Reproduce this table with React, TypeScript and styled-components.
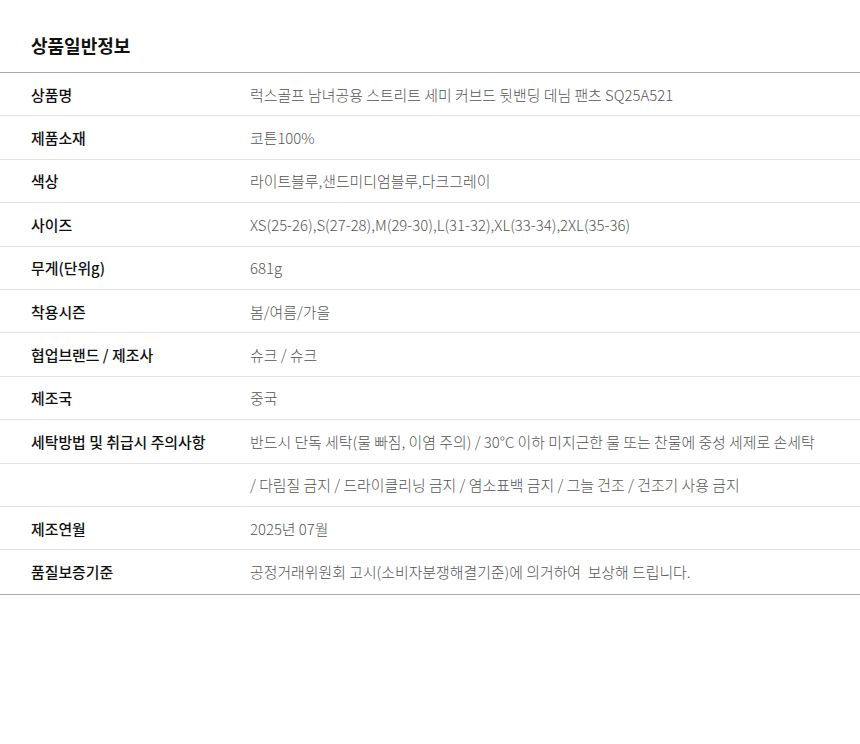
import styled, { createGlobalStyle } from "styled-components";

const GlobalStyle = createGlobalStyle`
  html, body {
    margin: 0;
    padding: 0;
    background: #fff;
  }
  body {
    font-family: "Noto Sans CJK KR", "Noto Sans", sans-serif;
  }
`;

const Wrapper = styled.section`
  width: 860px;
  padding-top: 32px;
`;

const Title = styled.h2`
  margin: 0;
  padding: 0 0 14px 31px;
  font-size: 18px;
  font-weight: 700;
  line-height: 26px;
  color: #111;
`;

const Table = styled.div`
  border-top: 1px solid #a9a9a9;
  border-bottom: 1px solid #a9a9a9;
`;

const Row = styled.div<{ $last?: boolean }>`
  display: flex;
  align-items: center;
  box-sizing: border-box;
  height: 43.4px;
  border-bottom: ${(p) => (p.$last ? "none" : "1px solid #e2e2e2")};
`;

const Label = styled.div`
  width: 219px;
  padding-left: 31px;
  font-size: 14.9px;
  font-weight: 500;
  color: #111;
`;

const Value = styled.div`
  flex: 1;
  font-size: 14.9px;
  font-weight: 300;
  color: #555;
  white-space: pre;
`;

const rows: [string, string][] = [
  ["상품명", "럭스골프 남녀공용 스트리트 세미 커브드 뒷밴딩 데님 팬츠 SQ25A521"],
  ["제품소재", "코튼100%"],
  ["색상", "라이트블루,샌드미디엄블루,다크그레이"],
  ["사이즈", "XS(25-26),S(27-28),M(29-30),L(31-32),XL(33-34),2XL(35-36)"],
  ["무게(단위g)", "681g"],
  ["착용시즌", "봄/여름/가을"],
  ["협업브랜드 / 제조사", "슈크 / 슈크"],
  ["제조국", "중국"],
  ["세탁방법 및 취급시 주의사항", "반드시 단독 세탁(물 빠짐, 이염 주의) / 30°C 이하 미지근한 물 또는 찬물에 중성 세제로 손세탁"],
  ["", "/ 다림질 금지 / 드라이클리닝 금지 / 염소표백 금지 / 그늘 건조 / 건조기 사용 금지"],
  ["제조연월", "2025년 07월"],
  ["품질보증기준", "공정거래위원회 고시(소비자분쟁해결기준)에 의거하여  보상해 드립니다."],
];

export default function App() {
  return (
    <>
      <GlobalStyle />
      <Wrapper>
        <Title>상품일반정보</Title>
        <Table>
          {rows.map(([label, value], i) => (
            <Row key={i} $last={i === rows.length - 1}>
              <Label>{label}</Label>
              <Value>{value}</Value>
            </Row>
          ))}
        </Table>
      </Wrapper>
    </>
  );
}
